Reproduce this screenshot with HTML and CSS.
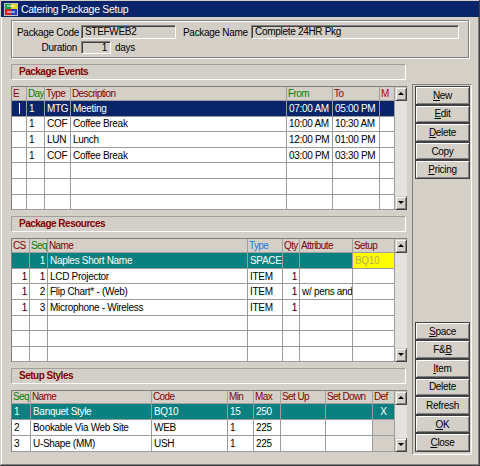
FILE: index.html
```html
<!DOCTYPE html>
<html lang="en">
<head>
    <meta charset="UTF-8">
    <title>Catering Package Setup</title>
    <link rel="stylesheet" href="styles.css">
</head>
<body>
<div class="window">
    <div class="titlebar">
        <svg class="app-icon" width="14" height="13" viewBox="0 0 14 13">
            <rect x="0" y="0" width="14" height="13" fill="#c0c0c0"/>
            <rect x="1" y="1" width="6" height="5" fill="#20a040"/>
            <rect x="7" y="1" width="6" height="5" fill="#e8d020"/>
            <rect x="1" y="6" width="6" height="6" fill="#d02020"/>
            <rect x="7" y="6" width="6" height="6" fill="#2040c0"/>
            <path d="M3 3h8M3 9h8" stroke="#fff" stroke-width="1"/>
        </svg>
        <span>Catering Package Setup</span>
    </div>

    <div class="pkg-box">
        <div class="pkg-row">
            <label class="lbl">Package Code</label>
            <div class="field code">STEFWEB2</div>
            <label class="lbl-name">Package Name</label>
            <div class="field name">Complete 24HR Pkg</div>
        </div>
        <div class="pkg-row">
            <label class="lbl">Duration</label>
            <div class="field dur">1</div>
            <span class="unit">days</span>
        </div>
    </div>

    <div class="main">
        <div class="left">
            <!-- Package Events -->
            <div class="sec">
                <div class="sec-head">Package Events</div>
                <div class="grid-wrap">
                    <table class="grid rows7">
                        <colgroup>
                            <col style="width:15px"><col style="width:18px"><col style="width:26px"><col style="width:216px">
                            <col style="width:46px"><col style="width:47px"><col style="width:15px">
                        </colgroup>
                        <tr class="hdr">
                            <th class="red">E</th><th class="green">Day</th><th class="red">Type</th><th class="red">Description</th>
                            <th class="green">From</th><th class="red">To</th><th class="bright">M</th>
                        </tr>
                        <tr class="sel-navy">
                            <td><span class="caret"></span></td><td>1</td><td>MTG</td><td>Meeting</td><td>07:00 AM</td><td>05:00 PM</td><td></td>
                        </tr>
                        <tr><td></td><td>1</td><td>COF</td><td>Coffee Break</td><td>10:00 AM</td><td>10:30 AM</td><td></td></tr>
                        <tr><td></td><td>1</td><td>LUN</td><td>Lunch</td><td>12:00 PM</td><td>01:00 PM</td><td></td></tr>
                        <tr><td></td><td>1</td><td>COF</td><td>Coffee Break</td><td>03:00 PM</td><td>03:30 PM</td><td></td></tr>
                        <tr><td></td><td></td><td></td><td></td><td></td><td></td><td></td></tr>
                        <tr><td></td><td></td><td></td><td></td><td></td><td></td><td></td></tr>
                        <tr><td></td><td></td><td></td><td></td><td></td><td></td><td></td></tr>
                    </table>
                    <div class="vscroll">
                        <div class="arrow up"></div>
                        <div class="track"></div>
                        <div class="arrow down"></div>
                    </div>
                </div>
            </div>

            <!-- Package Resources -->
            <div class="sec">
                <div class="sec-head">Package Resources</div>
                <div class="grid-wrap">
                    <table class="grid rows7">
                        <colgroup>
                            <col style="width:18px"><col style="width:18px"><col style="width:200px"><col style="width:35px">
                            <col style="width:17px"><col style="width:53px"><col style="width:42px">
                        </colgroup>
                        <tr class="hdr">
                            <th class="red">CS</th><th class="green">Seq</th><th class="red">Name</th><th class="blue">Type</th>
                            <th class="red">Qty</th><th class="red">Attribute</th><th class="red">Setup</th>
                        </tr>
                        <tr class="sel-teal">
                            <td></td><td class="num">1</td><td>Naples Short Name</td><td>SPACE</td><td></td><td></td><td class="hilite">BQ10</td>
                        </tr>
                        <tr><td class="num">1</td><td class="num">1</td><td>LCD Projector</td><td>ITEM</td><td class="num">1</td><td></td><td></td></tr>
                        <tr><td class="num">1</td><td class="num">2</td><td>Flip Chart* - (Web)</td><td>ITEM</td><td class="num">1</td><td>w/ pens and</td><td></td></tr>
                        <tr><td class="num">1</td><td class="num">3</td><td>Microphone - Wireless</td><td>ITEM</td><td class="num">1</td><td></td><td></td></tr>
                        <tr><td></td><td></td><td></td><td></td><td></td><td></td><td></td></tr>
                        <tr><td></td><td></td><td></td><td></td><td></td><td></td><td></td></tr>
                        <tr><td></td><td></td><td></td><td></td><td></td><td></td><td></td></tr>
                    </table>
                    <div class="vscroll">
                        <div class="arrow up"></div>
                        <div class="track"></div>
                        <div class="arrow down"></div>
                    </div>
                </div>
            </div>

            <!-- Setup Styles -->
            <div class="sec">
                <div class="sec-head">Setup Styles</div>
                <div class="grid-wrap">
                    <table class="grid rows3">
                        <colgroup>
                            <col style="width:19px"><col style="width:121px"><col style="width:76px"><col style="width:26px">
                            <col style="width:27px"><col style="width:45px"><col style="width:47px"><col style="width:22px">
                        </colgroup>
                        <tr class="hdr">
                            <th class="green">Seq</th><th class="red">Name</th><th class="red">Code</th><th class="red">Min</th>
                            <th class="red">Max</th><th class="red">Set Up</th><th class="red">Set Down</th><th class="red">Def</th>
                        </tr>
                        <tr class="sel-teal">
                            <td>1</td><td>Banquet Style</td><td>BQ10</td><td>15</td><td>250</td><td></td><td></td><td class="ctr">X</td>
                        </tr>
                        <tr><td>2</td><td>Bookable Via Web Site</td><td>WEB</td><td>1</td><td>225</td><td></td><td></td><td class="off"></td></tr>
                        <tr><td>3</td><td>U-Shape (MM)</td><td>USH</td><td>1</td><td>225</td><td></td><td></td><td class="off"></td></tr>
                    </table>
                    <div class="vscroll">
                        <div class="arrow up"></div>
                        <div class="track"></div>
                        <div class="arrow down"></div>
                    </div>
                </div>
            </div>
        </div>

        <div class="side">
            <div class="btn-group">
                <button class="btn default"><u>N</u>ew</button>
                <button class="btn"><u>E</u>dit</button>
                <button class="btn"><u>D</u>elete</button>
                <button class="btn">Copy</button>
                <button class="btn"><u>P</u>ricing</button>
            </div>
            <div class="btn-group bottom">
                <button class="btn"><u>S</u>pace</button>
                <button class="btn">F&amp;<u>B</u></button>
                <button class="btn"><u>I</u>tem</button>
                <button class="btn">Delete</button>
                <button class="btn">Refresh</button>
                <button class="btn"><u>O</u>K</button>
                <button class="btn"><u>C</u>lose</button>
            </div>
        </div>
    </div>
</div>
</body>
</html>
```

FILE: styles.css
```css
:root {
    --face: #d4d0c8;
    --shadow: #808080;
    --dark: #404040;
    --light: #ffffff;
    --navy: #0a246a;
    --teal: #0b8080;
    --hdr-red: #840000;
    --hdr-green: #008000;
    --line: #9c9c9c;
}

* {
    box-sizing: border-box;
}

body {
    margin: 0;
    background: var(--face);
    font-family: "Liberation Sans", Arial, sans-serif;
    font-size: 10px;
    letter-spacing: -0.3px;
    color: #000;
}

.window {
    width: 480px;
    height: 466px;
    padding: 1px;
    background: var(--face);
    box-shadow: inset -1px -1px var(--dark), inset 1px 1px var(--face),
                inset -2px -2px var(--shadow), inset 2px 2px var(--light);
    overflow: hidden;
}

.titlebar {
    height: 16px;
    background: var(--navy);
    color: #fff;
    display: flex;
    align-items: center;
    padding-left: 3px;
    font-size: 10.5px;
}

.app-icon {
    margin-right: 3px;
}

/* top group box */
.pkg-box {
    margin: 3px 0 0 10px;
    width: 458px;
    height: 38px;
    border: 1px solid var(--shadow);
    box-shadow: inset 1px 1px var(--light), 1px 1px var(--light);
    padding: 4px 0 0 5px;
}

.pkg-row {
    display: flex;
    align-items: center;
    height: 14px;
    white-space: nowrap;
}

.pkg-row + .pkg-row {
    margin-top: 2px;
    height: 13px;
}

.lbl {
    width: 60px;
    text-align: right;
    margin-right: 4px;
}

.lbl-name {
    margin: 0 4px 0 7px;
    width: 64px;
}

.field {
    height: 100%;
    border: 1px solid;
    border-color: var(--shadow) var(--light) var(--light) var(--shadow);
    box-shadow: inset 1px 1px var(--dark);
    padding: 0 3px;
    line-height: 12px;
    white-space: nowrap;
}

.field.code { width: 95px; }
.field.name { width: 208px; }
.field.dur { width: 30px; text-align: right; }

.unit {
    margin-left: 4px;
}

/* main area */
.main {
    display: flex;
    margin: 6px 0 0 10px;
}

.left {
    width: 396px;
}

.sec + .sec {
    margin-top: 6px;
}

.sec-head {
    width: 395px;
    height: 16px;
    border: 1px solid;
    border-color: #a0a0a0 var(--light) var(--light) #a0a0a0;
    color: var(--hdr-red);
    font-weight: bold;
    letter-spacing: -0.5px;
    padding-left: 7px;
    line-height: 14px;
    margin-bottom: 6px;
}

.grid-wrap {
    display: flex;
    border-top: 1px solid var(--shadow);
    border-left: 1px solid var(--shadow);
}

.grid {
    width: 383px;
    table-layout: fixed;
    border-collapse: separate;
    border-spacing: 0;
    background: #fff;
}

.grid th,
.grid td {
    border-right: 1px solid var(--line);
    border-bottom: 1px solid var(--line);
    padding: 0 2px;
    font-weight: normal;
    text-align: left;
    white-space: nowrap;
    overflow: hidden;
}

.grid .hdr th {
    background: var(--face);
    height: 14px;
    line-height: 12px;
    border-color: #a0a0a0;
    padding: 0 0 0 1px;
    letter-spacing: -0.6px;
}

.grid.rows7 td { height: 15.6px; }
.grid.rows3 td { height: 16px; }
.grid.rows3 .hdr th { height: 13px; }

.red { color: var(--hdr-red); }
.green { color: var(--hdr-green); }
.blue { color: #1e78e0; }
.bright { color: #c00000; }

.grid td.num { text-align: right; }
.grid td.ctr { text-align: center; }
.grid td.off { background: var(--face); }

.sel-navy td {
    background: var(--navy);
    color: #fff;
}

.sel-teal td {
    background: var(--teal);
    color: #fff;
}

.sel-teal td.hilite {
    background: #ffff00;
    color: #b8b050;
}

.caret {
    display: inline-block;
    width: 1px;
    height: 11px;
    background: #fff;
    margin-left: 5px;
    vertical-align: middle;
}

/* scrollbar */
.vscroll {
    width: 12px;
    display: flex;
    flex-direction: column;
    background: #e4e2de;
}

.vscroll .track {
    flex: 1;
}

.arrow {
    height: 14px;
    background: var(--face);
    border: 1px solid;
    border-color: var(--face) var(--dark) var(--dark) var(--face);
    box-shadow: inset 1px 1px var(--light), inset -1px -1px var(--shadow);
    position: relative;
}

.arrow::after {
    content: "";
    position: absolute;
    left: 2px;
    top: 4px;
    border-left: 3px solid transparent;
    border-right: 3px solid transparent;
}

.arrow.up::after { border-bottom: 3px solid #000; }
.arrow.down::after { border-top: 3px solid #000; }

/* side button panel */
.side {
    margin: 20px 0 0 5px;
    width: 60px;
    height: 371px;
    border: 1px solid;
    border-color: var(--shadow) var(--light) var(--light) var(--shadow);
    padding: 1px 0 2px 2px;
    display: flex;
    flex-direction: column;
    justify-content: space-between;
}

.btn-group {
    display: flex;
    flex-direction: column;
}

.btn {
    display: block;
    width: 55px;
    height: 18.6px;
    margin: 0;
    padding: 0;
    font: inherit;
    letter-spacing: inherit;
    color: #000;
    background: var(--face);
    border: 1px solid var(--dark);
    box-shadow: inset 1px 1px var(--light), inset -1px -1px var(--shadow);
    text-align: center;
    line-height: 15px;
}
```
